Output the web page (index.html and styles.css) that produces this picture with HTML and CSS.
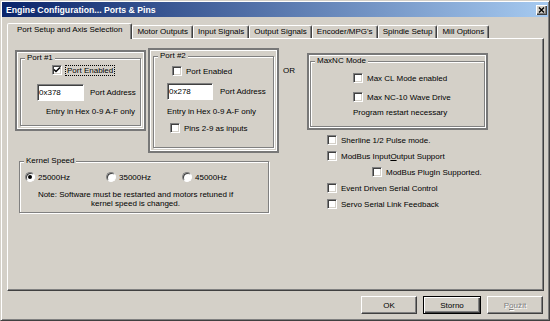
FILE: index.html
```html
<!DOCTYPE html>
<html lang="en">
<head>
  <meta charset="UTF-8">
  <title>Engine Configuration... Ports &amp; Pins</title>
  <link rel="stylesheet" href="styles.css">
</head>
<body>

  <div class="window">
    <div class="titlebar">
      <span class="title">Engine Configuration... Ports &amp; Pins</span>
      <span class="close">
        <svg width="11" height="10" viewBox="0 0 11 10"><path d="M3 2.5 L8 7.5 M8 2.5 L3 7.5" stroke="#000" stroke-width="1.4"/></svg>
      </span>
    </div>

    <div class="tabs">
      <div class="tab active">Port Setup and Axis Selection</div>
      <div class="tab">Motor Outputs</div>
      <div class="tab">Input Signals</div>
      <div class="tab">Output Signals</div>
      <div class="tab">Encoder/MPG's</div>
      <div class="tab">Spindle Setup</div>
      <div class="tab">Mill Options</div>
    </div>

    <div class="panel">
      <div class="left-col">
        <div class="ports">
          <!-- Port 1 -->
          <div class="frame port port1">
            <fieldset class="group">
              <legend>Port #1</legend>
              <label class="check p1-enable">
                <span class="box"><svg width="8" height="8" viewBox="0 0 8 8"><path d="M1 3.5 L3 5.5 L7 1.5" fill="none" stroke="#000" stroke-width="1.5"/></svg></span>
                <span class="focus">Port Enabled</span>
              </label>
              <div class="addr">
                <input type="text" class="hex" value="0x378">
                <span class="addr-label">Port Address</span>
              </div>
              <div class="hint">Entry in Hex 0-9 A-F only</div>
            </fieldset>
          </div>

          <!-- Port 2 -->
          <div class="frame port port2">
            <fieldset class="group">
              <legend>Port #2</legend>
              <label class="check p2-enable"><span class="box"></span>Port Enabled</label>
              <div class="addr">
                <input type="text" class="hex" value="0x278">
                <span class="addr-label">Port Address</span>
              </div>
              <div class="hint">Entry in Hex 0-9 A-F only</div>
              <label class="check pins"><span class="box"></span>Pins 2-9 as inputs</label>
            </fieldset>
          </div>
        </div>

        <fieldset class="group kernel">
          <legend>Kernel Speed</legend>
          <div class="radios">
            <label class="radio"><span class="dot on"></span>25000Hz</label>
            <label class="radio"><span class="dot"></span>35000Hz</label>
            <label class="radio"><span class="dot"></span>45000Hz</label>
          </div>
          <p class="note">Note: Software must be restarted and motors retuned if<br>kernel speed is changed.</p>
        </fieldset>
      </div>

      <div class="or">OR</div>

      <div class="right-col">
        <div class="frame maxnc">
          <fieldset class="group">
            <legend>MaxNC Mode</legend>
            <label class="check max-row"><span class="box"></span>Max CL Mode enabled</label>
            <label class="check max-row"><span class="box"></span>Max NC-10 Wave Drive</label>
            <div class="restart">Program restart necessary</div>
          </fieldset>
        </div>

        <div class="options">
          <label class="check opt"><span class="box"></span>Sherline 1/2 Pulse mode.</label>
          <label class="check opt"><span class="box"></span>ModBus Input<u>O</u>utput Support</label>
          <label class="check opt plugin"><span class="box"></span>ModBus PlugIn Supported.</label>
          <label class="check opt"><span class="box"></span>Event Driven Serial Control</label>
          <label class="check opt"><span class="box"></span>Servo Serial Link Feedback</label>
        </div>
      </div>
    </div>

    <div class="buttons">
      <button type="button" class="btn">OK</button>
      <button type="button" class="btn default">Storno</button>
      <button type="button" class="btn disabled">P<u>o</u>užít</button>
    </div>
  </div>

</body>
</html>
```

FILE: styles.css
```css
* {
  box-sizing: border-box;
}
body {
  margin: 0;
  background-color: #d4d0c8;
  font-family: "Liberation Sans", Arial, sans-serif;
  font-size: 8px;
  color: #000;
}
.window {
  width: 550px;
  height: 321px;
  padding: 1px;
  border: 1px solid;
  border-color: #d4d0c8 #404040 #404040 #d4d0c8;
  box-shadow: inset 1px 1px #fff, inset -1px -1px #808080;
  display: flex;
  flex-direction: column;
}
.titlebar {
  height: 15px;
  padding: 0 1px 0 4px;
  background: linear-gradient(to right, #0a246a, #a6caf0);
  display: flex;
  align-items: center;
  justify-content: space-between;
}
.title {
  color: white;
  font-weight: bold;
  font-size: 8.7px;
}
.close {
  width: 11px;
  height: 10px;
  background-color: #d4d0c8;
  box-shadow: inset 1px 1px #fff, inset -1px -1px #404040, inset -2px -2px #808080;
  display: flex;
}

/* tabs */
.tabs {
  height: 15px;
  margin: 6px 0 0 5px;
  display: flex;
  align-items: flex-end;
}
.tab {
  height: 13px;
  line-height: 12px;
  padding: 0 4px;
  border: 1px solid;
  border-bottom: 0;
  border-color: #fff #404040 transparent #fff;
  border-radius: 2px 2px 0 0;
  box-shadow: inset -1px 0 #808080;
  white-space: nowrap;
}
.tab.active {
  height: 16px;
  margin-bottom: -1px;
  padding: 0 9px;
  background-color: #d4d0c8;
  position: relative;
  z-index: 1;
}
.panel {
  height: 253px;
  margin: 0 4px 0 5px;
  padding-left: 7px;
  border: 1px solid;
  border-color: #fff #404040 #404040 #fff;
  box-shadow: inset -1px -1px #808080;
  display: flex;
}

/* group boxes */
.frame {
  border: 2px solid #787878;
  box-shadow: inset 0 0 0 1px #fff;
  padding: 1px 3px 3px;
}
.group {
  margin: 0;
  padding: 0;
  min-width: 0;
  border: 1px solid #808080;
  box-shadow: inset 1px 1px #fff, 1px 1px #fff;
}
.group legend {
  margin-left: 4px;
  padding: 0 2px;
  line-height: 10px;
  background-color: #d4d0c8;
}
.check {
  height: 14px;
  display: flex;
  align-items: center;
  white-space: nowrap;
}
.box {
  width: 10px;
  height: 10px;
  margin-right: 4px;
  flex: none;
  border: 1px solid;
  border-color: #808080 #fff #fff #808080;
  box-shadow: inset 1px 1px #404040, inset -1px -1px #d4d0c8;
  background-color: white;
  display: flex;
  align-items: center;
  justify-content: center;
}
.focus {
  line-height: 9px;
  padding: 0 1px;
  border: 1px dotted #000;
  margin-left: -1px;
}
.hex {
  height: 17px;
  padding: 0 0 0 1px;
  border: 1px solid;
  border-color: #808080 #fff #fff #808080;
  box-shadow: inset 1px 1px #404040;
  background-color: white;
  font: inherit;
  color: #000;
}
.addr {
  display: flex;
  align-items: center;
}
.hint {
  line-height: 10px;
}

/* left column */
.left-col {
  width: 264px;
}
.ports {
  margin-top: 9px;
  display: flex;
  align-items: flex-start;
  gap: 2px;
}
.port {
  width: 131px;
}
.port1 {
  margin-top: 2px;
}
.port1 .group {
  padding-bottom: 8px;
}
.p1-enable {
  margin-left: 31px;
}
.port1 .addr {
  margin: 7px 0 0 16px;
}
.port1 .hex {
  width: 47px;
}
.port1 .addr-label {
  margin-left: 6px;
}
.port1 .hint {
  margin: 6px 0 0 25px;
}
.port2 .group {
  padding-bottom: 12px;
}
.p2-enable {
  margin: 3px 0 0 18px;
}
.port2 .addr {
  margin: 5px 0 0 13px;
}
.port2 .hex {
  width: 46px;
}
.port2 .addr-label {
  margin-left: 7px;
}
.port2 .hint {
  margin: 7px 0 0 13px;
}
.pins {
  margin: 4px 0 0 16px;
}
.kernel {
  width: 250px;
  margin: 3px 0 0 4px;
  padding-bottom: 4px;
}
.radios {
  height: 14px;
  margin: 4px 0 0 5px;
  display: grid;
  grid-template-columns: 81px 76px auto;
}
.radio {
  display: flex;
  align-items: center;
}
.dot {
  width: 10px;
  height: 10px;
  margin-right: 3px;
  border-radius: 50%;
  border: 1px solid;
  border-color: #808080 #fff #fff #808080;
  box-shadow: inset 1px 1px #404040;
  background-color: white;
  display: flex;
  align-items: center;
  justify-content: center;
}
.dot.on::after {
  content: "";
  width: 4px;
  height: 4px;
  border-radius: 50%;
  background-color: #000;
}
.note {
  width: 231px;
  margin: 6px 0 0;
  line-height: 9px;
  text-align: center;
}

.or {
  width: 24px;
  margin: 27px 0 0 4px;
  line-height: 10px;
}

/* right column */
.maxnc {
  width: 181px;
  margin-top: 14px;
  padding: 1px;
}
.maxnc .group {
  padding-bottom: 8px;
}
.max-row {
  margin: 5px 0 0 42px;
}
.restart {
  margin: 4px 0 0 42px;
  line-height: 10px;
}
.options {
  margin: 2px 0 0 20px;
}
.opt {
  height: 16px;
}
.plugin {
  margin-left: 45px;
}

/* buttons */
.buttons {
  margin: 5px 5px 0 0;
  display: flex;
  justify-content: flex-end;
  gap: 6px;
}
.btn {
  width: 56px;
  height: 18px;
  padding: 0;
  border: 1px solid;
  border-color: #fff #404040 #404040 #fff;
  box-shadow: inset -1px -1px #808080;
  background-color: #d4d0c8;
  font: inherit;
  color: #000;
}
.btn.default {
  width: 58px;
  border-color: #000;
  box-shadow: inset 1px 1px #fff, inset -1px -1px #404040, inset -2px -2px #808080;
}
.btn.disabled {
  color: #808080;
  text-shadow: 1px 1px #fff;
}
```
